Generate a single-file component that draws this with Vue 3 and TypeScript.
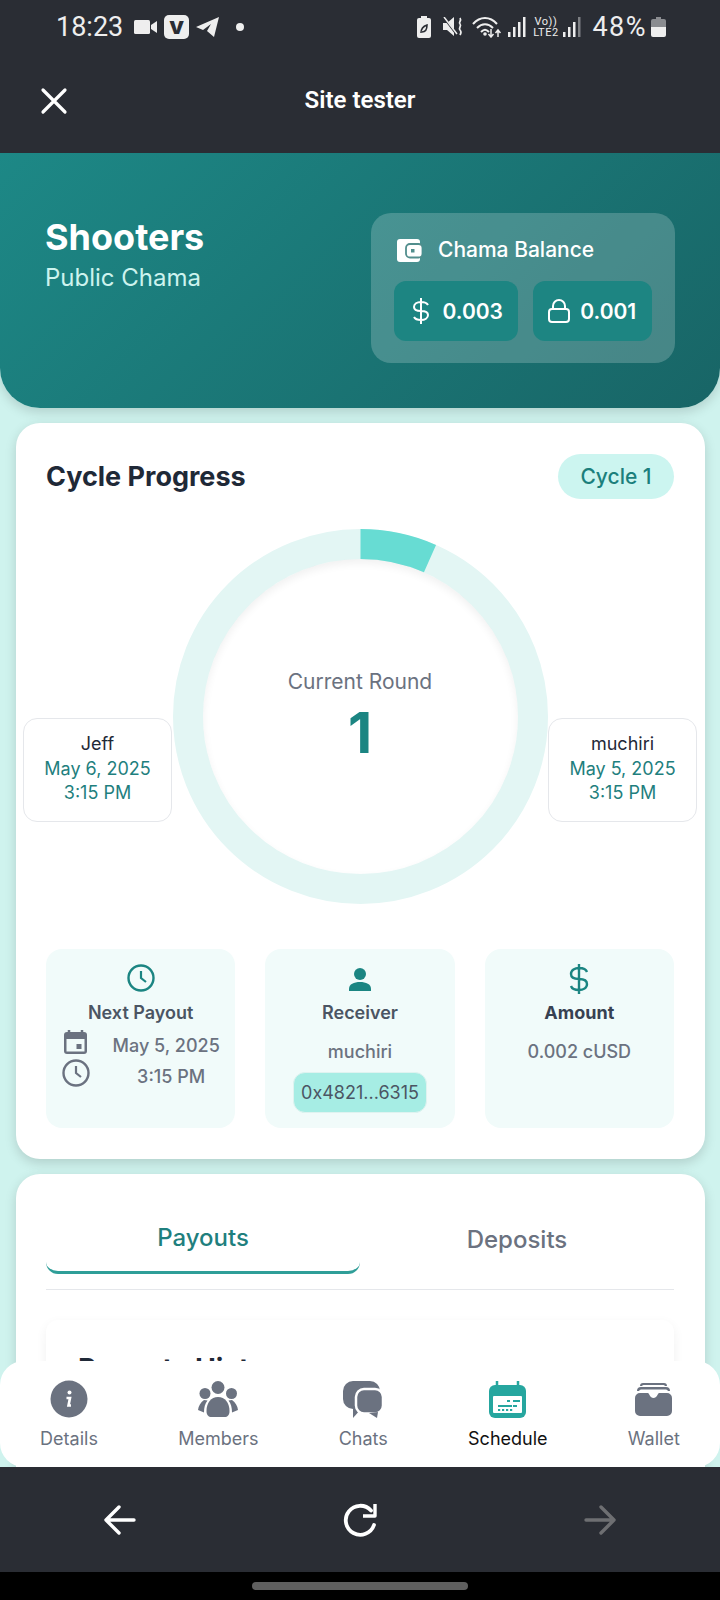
<script setup lang="ts">
interface Peer {
  name: string
  date: string
  time: string
}

const peers: Peer[] = [
  { name: 'Jeff', date: 'May 6, 2025', time: '3:15 PM' },
  { name: 'muchiri', date: 'May 5, 2025', time: '3:15 PM' }
]

const navItems = [
  { key: 'details', label: 'Details' },
  { key: 'members', label: 'Members' },
  { key: 'chats', label: 'Chats' },
  { key: 'schedule', label: 'Schedule' },
  { key: 'wallet', label: 'Wallet' }
]

// ring geometry, the teal arc stops a bit under a tenth of the way round
const ringRadius = 172.5
const ringLength = 2 * Math.PI * ringRadius
const ringDone = ringLength * 0.066
</script>

<template>
  <div class="phone">
    <div class="statusbar">
      <div class="status-left">
        <span class="clock">18:23</span>
        <svg class="gap-11" width="23" height="14" viewBox="0 0 23 14"><rect width="16" height="14" rx="1.500" fill="#eee"/><path d="M17 5l6-4v12l-6-4z" fill="#eee"/></svg>
        <span class="vbadge gap-7">v</span>
        <svg class="gap-7" width="23" height="20" viewBox="0 0 23 20"><path d="M0 10L23 0l-5 20-7-6 4-7-8 6z" fill="#eee"/></svg>
        <span class="dot gap-17"></span>
      </div>
      <div class="status-right">
        <svg width="14" height="22" viewBox="0 0 14 22"><rect y="2" width="14" height="20" rx="2" fill="#eee"/><rect x="4" width="6" height="3" fill="#eee"/><path d="M4 17c0-5 3-7 6-8 0 4-1 7-5 7" fill="none" stroke="#2a2d34" stroke-width="1.600"/></svg>
        <svg class="gap-12" width="20" height="19" viewBox="0 0 20 19"><path d="M0 6h4l7-6v19l-7-6H0z" fill="#eee"/><path d="M1 1l13 17" stroke="#2a2d34" stroke-width="2"/><path d="M1 0l13 17" stroke="#eee" stroke-width="1.500"/><path d="M17 1c2 3-2 4 0 6s-2 4 0 6 1 3 0 5" fill="none" stroke="#eee" stroke-width="1.700"/></svg>
        <svg class="gap-9" width="29" height="22" viewBox="0 0 29 22"><g fill="none" stroke="#eee" stroke-width="2"><path d="M1 8c7-8 17-8 24 0"/><path d="M5 12c5-5 11-5 16 0"/><path d="M9 16c3-3 5-3 8 0"/></g><circle cx="13" cy="18" r="1.800" fill="#eee"/><path d="M19 13v8M16.500 18l2.500 3 2.500-3M26 21v-7M23.500 17l2.500-3 2.500 3" fill="none" stroke="#eee" stroke-width="1.500"/></svg>
        <svg class="gap-7" width="18" height="20" viewBox="0 0 18 20"><g fill="#eee"><rect y="15" width="2.500" height="5"/><rect x="5" y="10" width="2.500" height="10"/><rect x="10" y="5" width="2.500" height="15"/><rect x="15" width="2.500" height="20"/></g></svg>
        <span class="lte gap-8"><span>Vo))</span><span>LTE2</span></span>
        <svg class="gap-6" width="18" height="20" viewBox="0 0 18 20"><g fill="#eee"><rect y="15" width="2.500" height="5"/><rect x="5" y="10" width="2.500" height="10"/><rect x="10" y="5" width="2.500" height="15"/><rect x="15" width="2.500" height="20" fill="#7d7f83"/></g></svg>
        <span class="pct gap-11">48%</span>
        <svg class="gap-4" width="15" height="20" viewBox="0 0 15 20"><rect x="5" width="5" height="3" fill="#8a8c90"/><path d="M0 4a2 2 0 0 1 2-2h11a2 2 0 0 1 2 2v6H0z" fill="#8a8c90"/><path d="M0 10h15v8a2 2 0 0 1-2 2H2a2 2 0 0 1-2-2z" fill="#eee"/></svg>
      </div>
    </div>

    <header class="appbar">
      <svg class="close" width="28" height="28" viewBox="0 0 28 28"><path d="M3 3l22 22M25 3L3 25" stroke="#fff" stroke-width="3.200" stroke-linecap="round"/></svg>
      <span class="appbar-title">Site tester</span>
    </header>

    <div class="viewport">
      <div class="scroller">
        <section class="hero">
          <div class="hero-name">
            <div class="chama">Shooters</div>
            <div class="chama-type">Public Chama</div>
          </div>
          <div class="balance">
            <div class="balance-head">
              <svg width="25" height="23" viewBox="0 0 25 23"><rect width="23" height="23" rx="3" fill="#fff"/><rect x="9" y="5" width="16.500" height="13.500" rx="4" fill="#fff" stroke="#528e8d" stroke-width="1.800"/><rect x="14" y="10" width="3.500" height="3.500" fill="#528e8d"/></svg>
              <span>Chama Balance</span>
            </div>
            <div class="balance-row">
              <div class="pill pill-wide">
                <svg width="18" height="26" viewBox="0 0 18 26"><path d="M16 7c-1-2-3-3-7-3S2 6 2 9s3 4 7 4 7 1 7 4-3 5-7 5-6-1-7-3M9 0v26" fill="none" stroke="#fff" stroke-width="2"/></svg>
                <span>0.003</span>
              </div>
              <div class="pill">
                <svg width="22" height="24" viewBox="0 0 22 24"><rect x="1" y="10" width="20" height="13" rx="3" fill="none" stroke="#fff" stroke-width="2"/><path d="M5 10V7a6 6 0 0 1 12 0v3" fill="none" stroke="#fff" stroke-width="2"/></svg>
                <span>0.001</span>
              </div>
            </div>
          </div>
        </section>

        <section class="card progress-card">
          <div class="card-head">
            <h2>Cycle Progress</h2>
            <span class="cycle-tag">Cycle 1</span>
          </div>

          <div class="ring-row">
            <div class="ring">
              <svg width="375" height="375" viewBox="0 0 375 375">
                <circle cx="187.500" cy="187.500" :r="ringRadius" fill="none" stroke="#e3f6f4" stroke-width="30"/>
                <circle cx="187.500" cy="187.500" :r="ringRadius" fill="none" stroke="#67dcd3" stroke-width="30" :stroke-dasharray="`${ringDone} ${ringLength}`" transform="rotate(-90 187.500 187.500)"/>
              </svg>
              <div class="ring-inner">
                <span class="ring-label">Current Round</span>
                <span class="ring-num">1</span>
              </div>
            </div>
            <div v-for="(p, i) in peers" :key="p.name" class="peer" :class="i === 0 ? 'peer-left' : 'peer-right'">
              <div class="peer-name">{{ p.name }}</div>
              <div class="peer-when">{{ p.date }}</div>
              <div class="peer-when">{{ p.time }}</div>
            </div>
          </div>

          <div class="stats">
            <div class="stat">
              <svg width="28" height="28" viewBox="0 0 28 28"><circle cx="14" cy="14" r="12.500" fill="none" stroke="#1b8582" stroke-width="2.400"/><path d="M14 7v7l5 4" fill="none" stroke="#1b8582" stroke-width="2.200"/></svg>
              <div class="stat-title">Next Payout</div>
              <div class="when-row">
                <svg width="23" height="24" viewBox="0 0 23 24"><path d="M5 0v3M18 0v3" stroke="#6b7280" stroke-width="2.500"/><rect y="2" width="23" height="22" rx="3" fill="#6b7280"/><rect x="2.500" y="9" width="18" height="12.500" fill="#f1fbfa"/><rect x="12.500" y="14" width="5" height="5" fill="#6b7280"/></svg>
                <span class="when-text">May 5, 2025</span>
              </div>
              <div class="when-row when-time">
                <svg width="28" height="28" viewBox="0 0 28 28"><circle cx="14" cy="14" r="12.500" fill="none" stroke="#6b7280" stroke-width="2.400"/><path d="M14 7v7l5 4" fill="none" stroke="#6b7280" stroke-width="2.200"/></svg>
                <span class="when-text">3:15 PM</span>
              </div>
            </div>
            <div class="stat">
              <svg width="28" height="28" viewBox="0 0 28 28"><ellipse cx="14" cy="10" rx="6" ry="6" fill="#1b8582"/><path d="M3 27v-2c0-5 5-7 11-7s11 2 11 7v2z" fill="#1b8582"/></svg>
              <div class="stat-title">Receiver</div>
              <div class="stat-value">muchiri</div>
              <div class="addr">0x4821...6315</div>
            </div>
            <div class="stat">
              <svg width="20" height="30" viewBox="0 0 20 30"><path d="M18 8c-1-3-4-4-8-4S2 6 2 10s4 5 8 5 8 1 8 5-4 6-8 6-7-1-8-4M10 0v30" fill="none" stroke="#1b8582" stroke-width="2.400"/></svg>
              <div class="stat-title stat-title-strong">Amount</div>
              <div class="stat-value">0.002 cUSD</div>
            </div>
          </div>
        </section>

        <section class="card tabs-card">
          <div class="tabs">
            <div class="tab tab-active">Payouts</div>
            <div class="tab">Deposits</div>
          </div>
          <div class="history">
            <h3>Payouts History</h3>
          </div>
        </section>
      </div>

      <nav class="tabbar">
        <div v-for="item in navItems" :key="item.key" class="nav-item" :class="{ 'nav-active': item.key === 'schedule' }">
          <div class="nav-icon">
            <svg v-if="item.key === 'details'" width="38" height="38" viewBox="0 0 38 38"><circle cx="19" cy="19" r="18.500" fill="#6b7280"/><circle cx="19.500" cy="12.500" r="2" fill="#fff"/><path d="M16.500 18H20l-1.500 7.500H21" fill="none" stroke="#fff" stroke-width="2.600"/></svg>
            <svg v-else-if="item.key === 'members'" width="40" height="36" viewBox="0 0 40 36"><g fill="#6b7280"><circle cx="20" cy="6.500" r="6.500"/><circle cx="7" cy="12.500" r="5.500"/><circle cx="33.500" cy="12.500" r="5.500"/><path d="M20 16c7 0 11.500 6 11.500 14 0 4-2 6-5 6h-13c-3 0-5-2-5-6 0-8 4.500-14 11.500-14z"/><path d="M6 19c-3.500 2.500-5.500 6-6 10l6 2.500c0-5 1-9 3.500-12z"/><path d="M34 19c3.500 2.500 5.500 6 6 10l-6 2.500c0-5-1-9-3.500-12z"/></g></svg>
            <svg v-else-if="item.key === 'chats'" width="40" height="37" viewBox="0 0 40 37"><rect width="37" height="28" rx="10" fill="#6b7280"/><path d="M10 26v11l8-9z" fill="#6b7280"/><rect x="13" y="8" width="27" height="24.500" rx="8" fill="#6b7280" stroke="#fff" stroke-width="2.500"/><path d="M26 32l8 5 1-6z" fill="#6b7280"/></svg>
            <svg v-else-if="item.key === 'schedule'" width="37" height="37" viewBox="0 0 37 37"><path d="M8 0v6M29 0v6" stroke="#26a69f" stroke-width="2.500"/><rect x="0" y="4" width="37" height="33" rx="6" fill="#26a69f"/><rect x="4" y="15" width="29" height="17" rx="1" fill="#fff"/><g fill="#26a69f"><rect x="18" y="19" width="3" height="2"/><rect x="24" y="19" width="7" height="2"/><rect x="9" y="24" width="14" height="2"/><rect x="24" y="24" width="4" height="2"/><rect x="9" y="28" width="2.200" height="2"/><rect x="13" y="28" width="2.200" height="2"/><rect x="17" y="28" width="2.200" height="2"/><rect x="21" y="28" width="2.200" height="2"/></g></svg>
            <svg v-else width="37" height="33" viewBox="0 0 37 33"><g fill="#6b7280"><path d="M5 3a3 3 0 0 1 3-3h21a3 3 0 0 1 3 3h-2a2 2 0 0 0-2-1H9a2 2 0 0 0-2 1z"/><path d="M2 8a4 4 0 0 1 4-4h25a4 4 0 0 1 4 4h-2a2.500 2.500 0 0 0-2-1.500H6A2.500 2.500 0 0 0 4 8z"/><path d="M0 15a5 5 0 0 1 5-5h8c1 0 2 5 5.500 5S23 10 24 10h8a5 5 0 0 1 5 5v13a5 5 0 0 1-5 5H5a5 5 0 0 1-5-5z"/></g></svg>
          </div>
          <span class="nav-label">{{ item.label }}</span>
        </div>
      </nav>
    </div>

    <footer class="browser-bar">
      <svg width="34" height="30" viewBox="0 0 34 30"><path d="M16 2L3 15l13 13M3 15h28" fill="none" stroke="#fff" stroke-width="3.400" stroke-linecap="round" stroke-linejoin="round"/></svg>
      <svg width="36" height="36" viewBox="0 0 36 36"><path d="M29 8.500a14.500 14.500 0 1 0 3 14.500" fill="none" stroke="#fff" stroke-width="3.800" stroke-linecap="round"/><path d="M33 2v12H21" fill="none" stroke="#fff" stroke-width="3.400" stroke-linejoin="round"/></svg>
      <svg width="34" height="30" viewBox="0 0 34 30"><path d="M18 2l13 13-13 13M31 15H3" fill="none" stroke="#6e6f72" stroke-width="3.400" stroke-linecap="round" stroke-linejoin="round"/></svg>
    </footer>

    <div class="gesture"><span></span></div>
  </div>
</template>

<style>
html, body {
  margin: 0;
  background: #000;
}
</style>

<style scoped>
.phone {
  width: 720px;
  height: 1600px;
  display: flex;
  flex-direction: column;
  overflow: hidden;
  font-family: Inter, "Liberation Sans", sans-serif;
  background: #cff3ee;
}

.statusbar {
  height: 53px;
  flex: none;
  box-sizing: border-box;
  padding: 0 54px 0 56px;
  background: #2a2d34;
  color: #eee;
  display: flex;
  align-items: center;
  justify-content: space-between;
  font-family: Roboto, sans-serif;
}

.status-left, .status-right {
  display: flex;
  align-items: center;
}

.gap-4 { margin-left: 4px; }
.gap-6 { margin-left: 6px; }
.gap-7 { margin-left: 7px; }
.gap-8 { margin-left: 8px; }
.gap-9 { margin-left: 9px; }
.gap-11 { margin-left: 11px; }
.gap-12 { margin-left: 12px; }
.gap-17 { margin-left: 17px; }

.clock {
  font-size: 27px;
}

.pct {
  font-size: 27px;
  letter-spacing: 1.5px;
}

.vbadge {
  width: 25px;
  height: 24px;
  border-radius: 5px;
  background: #eee;
  color: #2a2d34;
  font: 800 24px/21px Inter, sans-serif;
  text-align: center;
}

.dot {
  width: 8px;
  height: 8px;
  border-radius: 50%;
  background: #eee;
}

.lte {
  display: flex;
  flex-direction: column;
  align-items: center;
  width: 23px;
  font-size: 11px;
  line-height: 11px;
  letter-spacing: 0.5px;
}

.appbar {
  height: 100px;
  flex: none;
  box-sizing: border-box;
  padding-bottom: 6px;
  background: #2a2d34;
  position: relative;
  display: flex;
  align-items: center;
  justify-content: center;
}

.close {
  position: absolute;
  left: 40px;
  top: 34px;
}

.appbar-title {
  color: #fff;
  font: 600 24px Roboto, sans-serif;
}

.viewport {
  flex: 1;
  min-height: 0;
  position: relative;
  background: #cff3ee;
}

.scroller {
  height: 100%;
  overflow: hidden;
}

.hero {
  height: 255px;
  box-sizing: border-box;
  padding: 60px 45px 0;
  border-radius: 0 0 40px 40px;
  background: linear-gradient(135deg, #1d8886, #186566);
  display: flex;
  justify-content: space-between;
  box-shadow: 0 4px 12px rgba(0, 0, 0, 0.15);
}

.hero-name {
  padding-top: 2px;
}

.chama {
  color: #fff;
  font-size: 36px;
  font-weight: 700;
  line-height: 44px;
}

.chama-type {
  margin-top: 3px;
  color: #cdf3ee;
  font-size: 24px;
  line-height: 32px;
}

.balance {
  width: 304px;
  height: 150px;
  box-sizing: border-box;
  padding: 23px 23px 0;
  border-radius: 20px;
  background: rgba(255, 255, 255, 0.2);
}

.balance-head {
  display: flex;
  align-items: center;
  gap: 16px;
  padding-left: 3px;
  color: #fff;
  font-size: 21px;
  font-weight: 500;
  line-height: 28px;
}

.balance-row {
  display: flex;
  gap: 15px;
  margin-top: 17px;
}

.pill {
  width: 120px;
  height: 60px;
  box-sizing: border-box;
  border-radius: 12px;
  background: #1d8582;
  color: #fff;
  font-size: 21px;
  font-weight: 600;
  display: flex;
  align-items: center;
  justify-content: center;
  gap: 10px;
}

.pill-wide {
  width: 124px;
  gap: 13px;
  padding-left: 3px;
}

.card {
  margin: 15px 15.5px 0;
  background: #fff;
  border-radius: 24px;
  box-sizing: border-box;
  box-shadow: 0 4px 12px rgba(0, 0, 0, 0.15);
}

.progress-card {
  height: 736px;
  padding: 31px 30.5px 0;
}

.card-head {
  display: flex;
  align-items: center;
  justify-content: space-between;
}

.card-head h2 {
  margin: 0;
  color: #1f2937;
  font-size: 27px;
  font-weight: 700;
}

.cycle-tag {
  width: 116px;
  height: 45px;
  border-radius: 23px;
  background: #ccf5f0;
  color: #1b7f7c;
  font-size: 21px;
  font-weight: 500;
  line-height: 45px;
  text-align: center;
}

.ring-row {
  height: 375px;
  margin-top: 30px;
  position: relative;
  display: flex;
  justify-content: center;
}

.ring {
  width: 375px;
  height: 375px;
  position: relative;
}

.ring-inner {
  position: absolute;
  inset: 30px;
  border-radius: 50%;
  box-shadow: inset 0 4px 8px rgba(0, 0, 0, 0.06);
  display: flex;
  flex-direction: column;
  align-items: center;
  padding-top: 108px;
  box-sizing: border-box;
}

.ring-label {
  color: #6b7280;
  font-size: 21px;
  line-height: 30px;
}

.ring-num {
  color: #1b8582;
  font-size: 56px;
  font-weight: 700;
  line-height: 72px;
}

.peer {
  position: absolute;
  top: 189px;
  width: 149px;
  height: 104px;
  box-sizing: border-box;
  padding-top: 13px;
  border: 1px solid #e5e7eb;
  border-radius: 14px;
  background: #fff;
  text-align: center;
  line-height: 24.5px;
  font-size: 18px;
}

.peer-left { left: -23px; }
.peer-right { right: -23px; }

.peer-name { color: #1f2937; }
.peer-when { color: #1f7f7e; }

.stats {
  display: grid;
  grid-template-columns: repeat(3, 1fr);
  gap: 30px;
  margin-top: 45px;
}

.stat {
  height: 179px;
  box-sizing: border-box;
  padding-top: 15px;
  border-radius: 16px;
  background: #f1fbfa;
  display: flex;
  flex-direction: column;
  align-items: center;
  position: relative;
}

.stat-title {
  margin-top: 7px;
  color: #4b5563;
  font-size: 18px;
  font-weight: 600;
  line-height: 28px;
}

.stat-title-strong {
  margin-top: 5px;
  color: #374151;
  font-weight: 700;
}

.stat-value {
  margin-top: 11px;
  color: #6b7280;
  font-size: 18px;
  font-weight: 500;
  line-height: 28px;
}

.when-row {
  width: 100%;
  height: 30px;
  box-sizing: border-box;
  padding-left: 18px;
  display: flex;
  align-items: center;
}

.when-text {
  flex: 1;
  padding: 6px 0 0 10px;
  text-align: center;
  color: #6b7280;
  font-size: 18px;
  font-weight: 500;
}

.when-time {
  padding-left: 16px;
  margin-top: 1px;
}

.when-time .when-text {
  padding-left: 17px;
}

.addr {
  margin-top: 6px;
  width: 134px;
  height: 41px;
  border-radius: 12px;
  border: 1px solid #dff3f0;
  box-sizing: border-box;
  background: #a6ede4;
  color: #4b5563;
  font-size: 18px;
  line-height: 39px;
  text-align: center;
}

.tabs-card {
  height: 400px;
  padding: 31px 30.5px;
}

.tabs {
  display: flex;
  align-items: flex-start;
  height: 85px;
  border-bottom: 1px solid #e5e7eb;
  box-sizing: border-box;
}

.tab {
  flex: 1;
  text-align: center;
  color: #6b7280;
  font-size: 24px;
  font-weight: 500;
  line-height: 32px;
  padding-top: 19px;
  height: 69px;
  box-sizing: border-box;
}

.tab-active {
  padding-top: 17px;
  color: #1f7f7e;
  border-bottom: 3px solid #2f9e98;
  border-radius: 0 0 12px 12px;
}

.history {
  margin-top: 30px;
  padding: 32px;
  border-radius: 12px;
  background: #fff;
  box-shadow: 0 4px 12px rgba(0, 0, 0, 0.06);
}

.history h3 {
  margin: 0;
  color: #1f2937;
  font-size: 28px;
  font-weight: 700;
}

.tabbar {
  position: absolute;
  left: 0;
  right: 0;
  bottom: 0;
  height: 106px;
  border-radius: 24px;
  background: #fff;
  display: flex;
  justify-content: space-around;
  align-items: flex-start;
  padding-top: 19px;
  box-sizing: border-box;
}

.nav-item {
  display: flex;
  flex-direction: column;
  align-items: center;
  gap: 9px;
}

.nav-icon {
  height: 38px;
  display: flex;
  align-items: center;
  justify-content: center;
}

.nav-label {
  color: #6b7280;
  font-size: 18px;
  line-height: 24px;
}

.nav-active .nav-label {
  color: #111;
}

.browser-bar {
  height: 105px;
  flex: none;
  background: #2a2d34;
  display: flex;
  align-items: center;
  justify-content: space-around;
}

.gesture {
  height: 28px;
  flex: none;
  background: #000;
  display: flex;
  justify-content: center;
  padding-top: 10px;
  box-sizing: border-box;
}

.gesture span {
  width: 216px;
  height: 8px;
  border-radius: 4px;
  background: #5f5f5f;
}
</style>
